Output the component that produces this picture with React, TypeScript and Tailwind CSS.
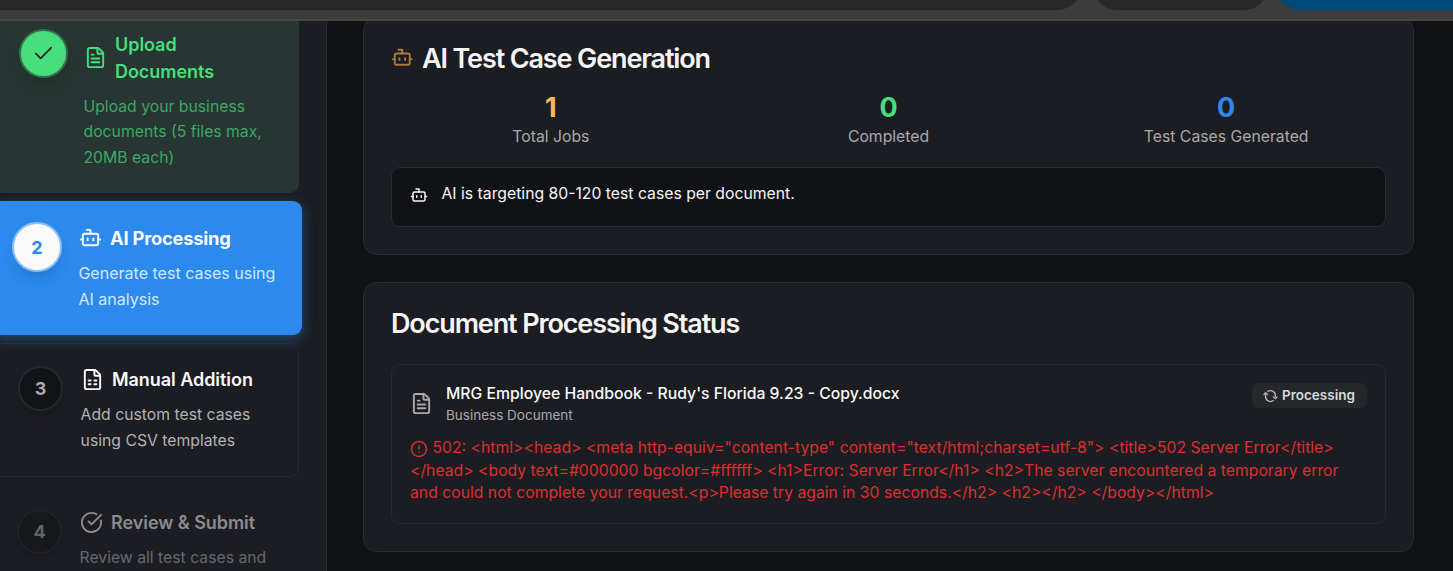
import React from 'react';
import { Bot, FileText, FileSpreadsheet, CircleCheckBig, Check, CircleAlert } from 'lucide-react';

function BrowserBar() {
  return (
    <div className="flex h-[21px] shrink-0 items-start overflow-hidden border-b-2 border-[#474747] bg-[#3c3c3c]">
      <div className="-mt-[30px] h-10 w-[1081px] shrink-0 rounded-br-[24px] bg-[#282828]" />
      <div className="-mt-[30px] ml-[13px] h-10 w-[173px] shrink-0 rounded-b-[22px] bg-[#282828]" />
      <div className="-mt-[30px] ml-[9px] h-10 flex-1 rounded-bl-[24px] bg-[#004a77]" />
    </div>
  );
}

function CycleIcon({ className }: { className: string }) {
  return (
    <svg className={className} viewBox="0 0 15 14" fill="none" stroke="currentColor" strokeWidth="1.3">
      <path d="M2.6 5.2v1.8a5 5 0 0 0 8.2 4.3" />
      <path d="M4.4 2.6a5 5 0 0 1 8 4v1.6" />
      <path d="M0.6 6 2.6 3.8 4.9 6" />
      <path d="M10.1 7.6l2.3 2.1 2.1-2.1" />
    </svg>
  );
}

function Stat({ value, label, color }: { value: string; label: string; color: string }) {
  return (
    <div className="flex flex-1 flex-col items-center">
      <div className={`text-[27px] leading-[36px] font-bold ${color}`}>{value}</div>
      <div className="text-[15.75px] leading-[22.5px] text-[#a9a9aa]">{label}</div>
    </div>
  );
}

function Sidebar() {
  return (
    <aside className="flex w-[327px] shrink-0 flex-col overflow-hidden border-r border-[#2a2b33] bg-[#1c1d22]">
      <div className="-ml-[7px] flex h-[172px] w-[306px] shrink-0 rounded-b-[9px] bg-[#273632] pt-[10px] pl-[26px]">
        <div className="-mt-[2px] flex size-[49px] shrink-0 items-center justify-center rounded-full border-2 border-[#37704f] bg-[#46df7c] shadow-lg">
          <Check className="size-[23px] text-[#16201b]" strokeWidth={1.8} />
        </div>
        <div className="ml-[15px]">
          <div className="flex items-center gap-[8px] text-[#46df7c]">
            <FileText className="-mt-[2px] ml-[1px] size-[23px] shrink-0" strokeWidth={2} />
            <div className="w-[130px] text-[18px] leading-[27px] font-semibold tracking-[-0.05px]">Upload Documents</div>
          </div>
          <p className="mt-[9px] ml-[0.5px] w-[200px] text-[15.75px] leading-[25.4px] text-[#3da766]">
            Upload your business documents (5 files max, 20MB each)
          </p>
        </div>
      </div>

      <div className="relative mt-[8px] -ml-[10px] flex h-[134px] w-[312px] shrink-0 rounded-[9px] bg-[#2b8aec] pt-[21px] pl-[22px] shadow-[0_4px_14px_rgba(43,138,236,0.4)]">
        <div className="flex size-[50px] shrink-0 items-center justify-center rounded-full border-2 border-[#8cbff5] bg-[#fafafa] text-[18px] font-bold text-[#2b8aec] shadow-lg">
          2
        </div>
        <div className="ml-[16px] -mt-[1px]">
          <div className="flex items-center gap-[8px] text-[#fafafa]">
            <Bot className="-mt-[2px] ml-[1px] size-[23px]" strokeWidth={2} />
            <span className="text-[18.3px] leading-[35px] font-bold tracking-[-0.2px]">AI Processing</span>
          </div>
          <p className="mt-[4px] ml-[0.4px] w-[210px] text-[16.05px] leading-[26px] text-[#d5e6f9]">
            Generate test cases using AI analysis
          </p>
        </div>
      </div>

      <div className="mt-[8px] -ml-[7px] flex h-[134px] w-[306px] shrink-0 rounded-[9px] border border-[#292a2f] pt-[22px] pl-[24px]">
        <div className="flex size-[45px] shrink-0 items-center justify-center rounded-full border-2 border-[#25282f] bg-[#121317] text-[18px] font-bold text-[#a9a9aa] shadow-lg">
          3
        </div>
        <div className="ml-[17px]">
          <div className="flex items-center gap-[8px] text-[#fafafa]">
            <FileSpreadsheet className="ml-[1px] size-[23px]" strokeWidth={2} />
            <span className="text-[18px] leading-[27px] font-semibold tracking-[-0.05px]">Manual Addition</span>
          </div>
          <p className="mt-[9px] ml-[0.6px] w-[200px] text-[15.75px] leading-[25.6px] text-[#b2b2b3]">
            Add custom test cases using CSV templates
          </p>
        </div>
      </div>

      <div className="-ml-[7px] flex w-[306px] shrink-0 pt-[32px] pl-[24px]">
        <div className="flex size-[45px] shrink-0 items-center justify-center rounded-full border-2 border-[#202228] bg-[#17181c] text-[18px] font-bold text-[#626366] shadow-md">
          4
        </div>
        <div className="ml-[17px]">
          <div className="flex items-center gap-[8px] text-[#8b8b8d]">
            <CircleCheckBig className="ml-[1px] size-[23px]" strokeWidth={2} />
            <span className="text-[18px] leading-[27px] font-semibold tracking-[-0.05px]">Review &amp; Submit</span>
          </div>
          <p className="mt-[10px] ml-[0.5px] w-[200px] text-[15.75px] leading-[24px] text-[#67686b]">
            Review all test cases and
          </p>
        </div>
      </div>
    </aside>
  );
}

export default function App() {
  return (
    <div className="flex h-[571px] w-[1453px] flex-col overflow-hidden bg-[#111216] font-['Inter',sans-serif]">
      <BrowserBar />
      <div className="flex min-h-0 flex-1">
        <Sidebar />
        <main className="flex flex-1 flex-col gap-[27px] overflow-hidden pr-[39px] pl-[36px]">
          <section className="-mt-[4px] h-[238px] shrink-0 rounded-[13.5px] border border-[#2a2b33] bg-[#1c1d22] px-[27px] pt-[27px]">
            <h2 className="flex items-center gap-[8.5px] text-[27px] leading-[27px] font-semibold tracking-[-1.13px] text-[#f5f5f5]">
              <Bot className="-mt-[2px] size-[22.5px] text-[#a97c3c]" strokeWidth={2} />
              AI Test Case Generation
            </h2>
            <div className="mt-[18px] flex gap-[18px]">
              <Stat value="1" label="Total Jobs" color="text-[#f7b955]" />
              <Stat value="0" label="Completed" color="text-[#46df7c]" />
              <Stat value="0" label="Test Cases Generated" color="text-[#2b8aec]" />
            </div>
            <div className="mt-[18px] flex h-[60px] gap-[13.5px] rounded-[9px] border border-[#2a2b33] bg-[#111216] pt-[14px] pl-[18px]">
              <Bot className="mt-[4px] size-[18px] text-[#f5f5f5]" strokeWidth={2} />
              <span className="text-[15.75px] leading-[23px] text-[#f5f5f5]">AI is targeting 80-120 test cases per document.</span>
            </div>
          </section>

          <section className="h-[270px] shrink-0 rounded-[13.5px] border border-[#2a2b33] bg-[#1c1d22] px-[27px] pt-[27px]">
            <h2 className="text-[27px] leading-[27px] font-semibold tracking-[-1.13px] text-[#f5f5f5]">
              Document Processing Status
            </h2>
            <div className="mt-[27px] h-[160px] rounded-[9px] border border-[#292a2f] px-[18px] pt-[18px]">
              <div className="flex items-start">
                <FileText className="mt-[9px] size-[23px] text-[#a9a9aa]" strokeWidth={2} />
                <div className="ml-[13px] flex-1">
                  <div className="text-[15.75px] leading-[22px] font-medium text-[#fafafa]">
                    MRG Employee Handbook - Rudy&apos;s Florida 9.23 - Copy.docx
                  </div>
                  <div className="text-[13.5px] leading-[20px] text-[#a9a9aa]">Business Document</div>
                </div>
                <div className="flex h-[25px] w-[115px] items-center gap-[4px] rounded-[7px] bg-[#26272b] pl-[11px] text-[13.5px] font-semibold text-[#d9d9da]">
                  <CycleIcon className="h-[14px] w-[15px] shrink-0 text-[#b9b9ba]" />
                  Processing
                </div>
              </div>
              <div className="mt-[12px] text-[15.75px] leading-[22.5px] text-[#dc2f2f]">
                <CircleAlert className="mr-[4.5px] inline size-[18px] align-middle" strokeWidth={2} />
                {'502: <html><head> <meta http-equiv="content-type" content="text/html;charset=utf-8"> <title>502 Server Error</title> </head> <body text=#000000 bgcolor=#ffffff> <h1>Error: Server Error</h1> <h2>The server encountered a temporary error and could not complete your request.<p>Please try again in 30 seconds.</h2> <h2></h2> </body></html>'}
              </div>
            </div>
          </section>
        </main>
      </div>
    </div>
  );
}
